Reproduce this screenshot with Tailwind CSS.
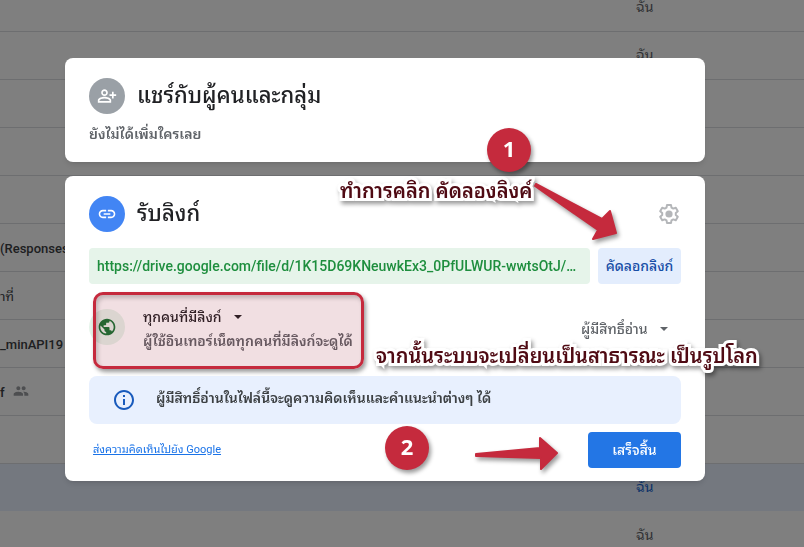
<!DOCTYPE html>
<html lang="th">
<head>
    <meta charset="UTF-8">
    <meta name="viewport" content="width=device-width, initial-scale=1.0">
    <title>รับลิงก์</title>
    <script src="https://cdn.jsdelivr.net/npm/@tailwindcss/browser@4"></script>
</head>
<body class="h-screen overflow-hidden bg-white font-[Roboto,'Noto_Sans_Thai_Looped',Loma,Garuda,Waree,'Noto_Sans_Thai',sans-serif]">

    <!-- file list -->
    <table class="-mt-[17px] w-full table-fixed text-sm text-[#5f6368]">
        <tbody>
            <tr class="h-12 border-b border-[#dadce0]"><td></td><td class="w-[168px]">ฉัน</td></tr>
            <tr class="h-12 border-b border-[#dadce0]"><td></td><td>ฉัน</td></tr>
            <tr class="h-12 border-b border-[#dadce0]"><td></td><td></td></tr>
            <tr class="h-12 border-b border-[#dadce0]"><td></td><td></td></tr>
            <tr class="h-12 border-b border-[#dadce0]"><td></td><td></td></tr>
            <tr class="h-12 border-b border-[#dadce0]"><td class="pt-1 text-[13px] font-medium text-[#3c4043]">(Responses)</td><td></td></tr>
            <tr class="h-12 border-b border-[#dadce0]"><td class="pt-1 text-[13px] text-[#3c4043]">้าที่</td><td></td></tr>
            <tr class="h-12 border-b border-[#dadce0]"><td class="pt-1 text-[13px] font-medium text-[#3c4043]">_minAPI19</td><td></td></tr>
            <tr class="h-12 border-b border-[#dadce0]">
                <td class="pt-1 text-[13px] font-medium text-[#3c4043]">
                    <div class="flex items-center gap-2">
                        f
                        <svg class="mb-1 size-4 fill-[#9a9da1]" viewBox="0 0 24 24"><path d="M16 11c1.66 0 2.99-1.34 2.99-3S17.66 5 16 5s-3 1.34-3 3 1.34 3 3 3zm-8 0c1.66 0 2.99-1.34 2.99-3S9.66 5 8 5 5 6.34 5 8s1.34 3 3 3zm0 2c-2.33 0-7 1.17-7 3.5V19h14v-2.5c0-2.33-4.67-3.5-7-3.5zm8 0c-.29 0-.62.02-.97.05 1.16.84 1.97 1.97 1.97 3.45V19h6v-2.5c0-2.33-4.67-3.5-7-3.5z"/></svg>
                    </div>
                </td>
                <td></td>
            </tr>
            <tr class="h-12 border-b border-[#dadce0]"><td></td><td></td></tr>
            <tr class="h-12 bg-[#e8f0fe] text-[#1967d2]"><td></td><td>ฉัน</td></tr>
            <tr class="h-12"><td></td><td>ฉัน</td></tr>
        </tbody>
    </table>

    <!-- share dialog -->
    <div class="fixed inset-0 bg-black/50 pt-[58px] pr-[99px] pl-[65px]">
        <div class="relative mx-auto flex max-w-[640px] flex-col gap-3.5">

            <section class="rounded-lg bg-white px-6 pt-5 pb-4 shadow-md">
                <div class="flex items-center gap-3">
                    <span class="flex size-9 items-center justify-center rounded-full bg-[#9aa0a6]">
                        <svg class="size-5 fill-white" viewBox="0 0 24 24"><path d="M9 12c2.21 0 4-1.79 4-4s-1.79-4-4-4-4 1.79-4 4 1.79 4 4 4zm0-6c1.1 0 2 .9 2 2s-.9 2-2 2-2-.9-2-2 .9-2 2-2zm0 7c-2.67 0-8 1.34-8 4v3h16v-3c0-2.66-5.33-4-8-4zm6 5H3v-.99C3.2 16.29 6.3 15 9 15s5.8 1.29 6 2v1zm5-8V7h-2v3h-3v2h3v3h2v-3h3v-2z"/></svg>
                    </span>
                    <h2 class="text-[22px] leading-9 font-medium text-[#202124]">แชร์กับผู้คนและกลุ่ม</h2>
                </div>
                <p class="mt-2 text-sm leading-6 font-semibold text-[#5f6368]">ยังไม่ได้เพิ่มใครเลย</p>
            </section>

            <section class="rounded-lg bg-white px-6 pt-5 pb-[13px] shadow-md">
                <div class="flex items-center gap-3">
                    <span class="flex size-9 items-center justify-center rounded-full bg-[#4285f4]">
                        <svg class="size-5 fill-white" viewBox="0 0 24 24"><path d="M3.9 12c0-1.71 1.39-3.1 3.1-3.1h4V7H7c-2.76 0-5 2.24-5 5s2.24 5 5 5h4v-1.9H7c-1.71 0-3.1-1.39-3.1-3.1zM8 13h8v-2H8v2zm9-6h-4v1.9h4c1.71 0 3.1 1.39 3.1 3.1s-1.39 3.1-3.1 3.1h-4V17h4c2.76 0 5-2.24 5-5s-2.24-5-5-5z"/></svg>
                    </span>
                    <h2 class="flex-1 text-[22px] leading-9 font-medium text-[#202124]">รับลิงก์</h2>
                    <button type="button" aria-label="การตั้งค่า" class="flex size-6 items-center justify-center">
                        <svg class="size-6" viewBox="0 0 24 24" fill="none" stroke="#b4b6b9" stroke-width="2" stroke-linejoin="round"><path d="M10 3h4l.5 2.6 1.8 1 2.5-.9 2 3.5-2 1.7v2.2l2 1.7-2 3.5-2.5-.9-1.8 1L14 21h-4l-.5-2.6-1.8-1-2.5.9-2-3.5 2-1.7v-2.2l-2-1.7 2-3.5 2.5.9 1.8-1z"/><circle cx="12" cy="12" r="3.6" fill="#b4b6b9" stroke="none"/></svg>
                    </button>
                </div>

                <div class="mt-4 flex gap-2">
                    <input type="text" readonly aria-label="ลิงก์" value="https://drive.google.com/file/d/1K15D69KNeuwkEx3_0PfULWUR-wwtsOtJ/…" class="h-9 min-w-0 flex-1 rounded bg-[#e6f4ea] px-2 text-sm font-medium text-[#1e8e3e] outline-none">
                    <button type="button" class="h-9 w-[83px] rounded bg-[#e3edfd] text-sm font-medium text-[#174ea6]">คัดลอกลิงก์</button>
                </div>

                <div class="flex h-[92px] items-start pt-[21px]">
                    <span class="mt-1 flex size-9 items-center justify-center rounded-full bg-[#e6f4ea]">
                        <svg class="size-5 fill-[#137333]" viewBox="0 0 24 24"><path d="M12 2C6.48 2 2 6.48 2 12s4.48 10 10 10 10-4.48 10-10S17.52 2 12 2zm-1 17.93c-3.95-.49-7-3.85-7-7.93 0-.62.08-1.21.21-1.79L9 15v1c0 1.1.9 2 2 2v1.93zm6.9-2.54c-.26-.81-1-1.39-1.9-1.39h-1v-3c0-.55-.45-1-1-1H8v-2h2c.55 0 1-.45 1-1V7h2c1.1 0 2-.9 2-2v-.41c2.93 1.19 5 4.06 5 7.41 0 2.08-.8 3.97-2.1 5.39z"/></svg>
                    </span>
                    <div class="ml-[18px] flex-1 text-sm leading-6">
                        <div class="flex items-center gap-3">
                            <select aria-label="ผู้ที่เข้าถึงได้" class="h-6 appearance-none font-medium text-[#202124] outline-none">
                                <option>ทุกคนที่มีลิงก์</option>
                            </select>
                            <svg class="h-1 w-2 fill-[#202124]" viewBox="0 0 8 4"><path d="M0 0h8L4 4z"/></svg>
                        </div>
                        <p class="font-semibold text-[#5f6368]">ผู้ใช้อินเทอร์เน็ตทุกคนที่มีลิงก์จะดูได้</p>
                    </div>
                    <div class="mt-3 mr-[13px] flex items-center gap-3">
                        <select aria-label="บทบาท" class="h-6 appearance-none text-sm font-medium text-[#5f6368] outline-none">
                            <option>ผู้มีสิทธิ์อ่าน</option>
                        </select>
                        <svg class="h-1 w-2 fill-[#5f6368]" viewBox="0 0 8 4"><path d="M0 0h8L4 4z"/></svg>
                    </div>
                </div>

                <div class="flex h-12 items-center gap-5 rounded-lg bg-[#e8f0fe] px-[23px]">
                    <svg class="size-6 fill-[#185abc]" viewBox="0 0 24 24"><path d="M11 7h2v2h-2zm0 4h2v6h-2zm1-9C6.48 2 2 6.48 2 12s4.48 10 10 10 10-4.48 10-10S17.52 2 12 2zm0 18c-4.41 0-8-3.59-8-8s3.59-8 8-8 8 3.59 8 8-3.59 8-8 8z"/></svg>
                    <p class="pb-1 text-sm leading-6 font-semibold text-[#3c4043]">ผู้มีสิทธิ์อ่านในไฟล์นี้จะดูความคิดเห็นและคำแนะนำต่างๆ ได้</p>
                </div>

                <div class="mt-2 flex items-center justify-between pl-1">
                    <a href="#" class="text-[11px] text-[#1a73e8] underline">ส่งความคิดเห็นไปยัง Google</a>
                    <button type="button" class="h-9 w-[93px] rounded bg-[#2376e5] text-sm font-medium text-white">เสร็จสิ้น</button>
                </div>
            </section>

            <!-- annotations -->
            <div class="pointer-events-none absolute inset-0 text-[#4f0a13]">
                <div class="absolute top-[234px] left-7 h-[77px] w-[271px] rounded-[10px] border-3 border-[#c52a3d] bg-[#9f1d2f]/14 shadow-[2px_3px_4px_rgb(0_0_0/0.4),inset_2px_3px_4px_rgb(0_0_0/0.2)]"></div>
                <span class="absolute top-[70px] left-[422px] flex size-11 items-center justify-center rounded-full bg-[#c52a3d] pb-1 font-['Open_Sans'] text-[22px] font-bold text-white shadow-[2px_3px_4px_rgb(0_0_0/0.4)]">1</span>
                <span class="absolute top-[368px] left-80 flex size-11 items-center justify-center rounded-full bg-[#c52a3d] pb-1 font-['Open_Sans'] text-[22px] font-bold text-white shadow-[2px_3px_4px_rgb(0_0_0/0.4)]">2</span>
                <p class="absolute top-[119px] left-[275px] text-xl font-semibold whitespace-nowrap drop-shadow-[2px_3px_2px_rgb(0_0_0/0.4)] [-webkit-text-stroke:6px_white] [paint-order:stroke_fill]">ทำการคลิก คัดลองลิงค์</p>
                <p class="absolute top-[284px] left-[311px] text-xl font-semibold whitespace-nowrap drop-shadow-[2px_3px_2px_rgb(0_0_0/0.4)] [-webkit-text-stroke:6px_white] [paint-order:stroke_fill]">จากนั้นระบบจะเปลี่ยนเป็นสาธารณะ เป็นรูปโลก</p>
                <svg class="absolute top-[122px] left-[466px] h-[64px] w-[90px] fill-[#c52a3d] stroke-[#c52a3d] drop-shadow-[2px_3px_2px_rgb(0_0_0/0.4)]" viewBox="0 0 90 64" stroke-width="2" stroke-linejoin="round"><path d="M5 4 71 39 79 31 85 53 62 59 67 50 4 6z"/></svg>
                <svg class="absolute top-[376px] left-[406px] h-[38px] w-[90px] fill-[#c52a3d] stroke-[#c52a3d] drop-shadow-[2px_3px_2px_rgb(0_0_0/0.4)]" viewBox="0 0 90 38" stroke-width="2" stroke-linejoin="round"><path d="M5 20 69 14V4L86 19 70 35V24L5 22z"/></svg>
            </div>
        </div>
    </div>

</body>
</html>
